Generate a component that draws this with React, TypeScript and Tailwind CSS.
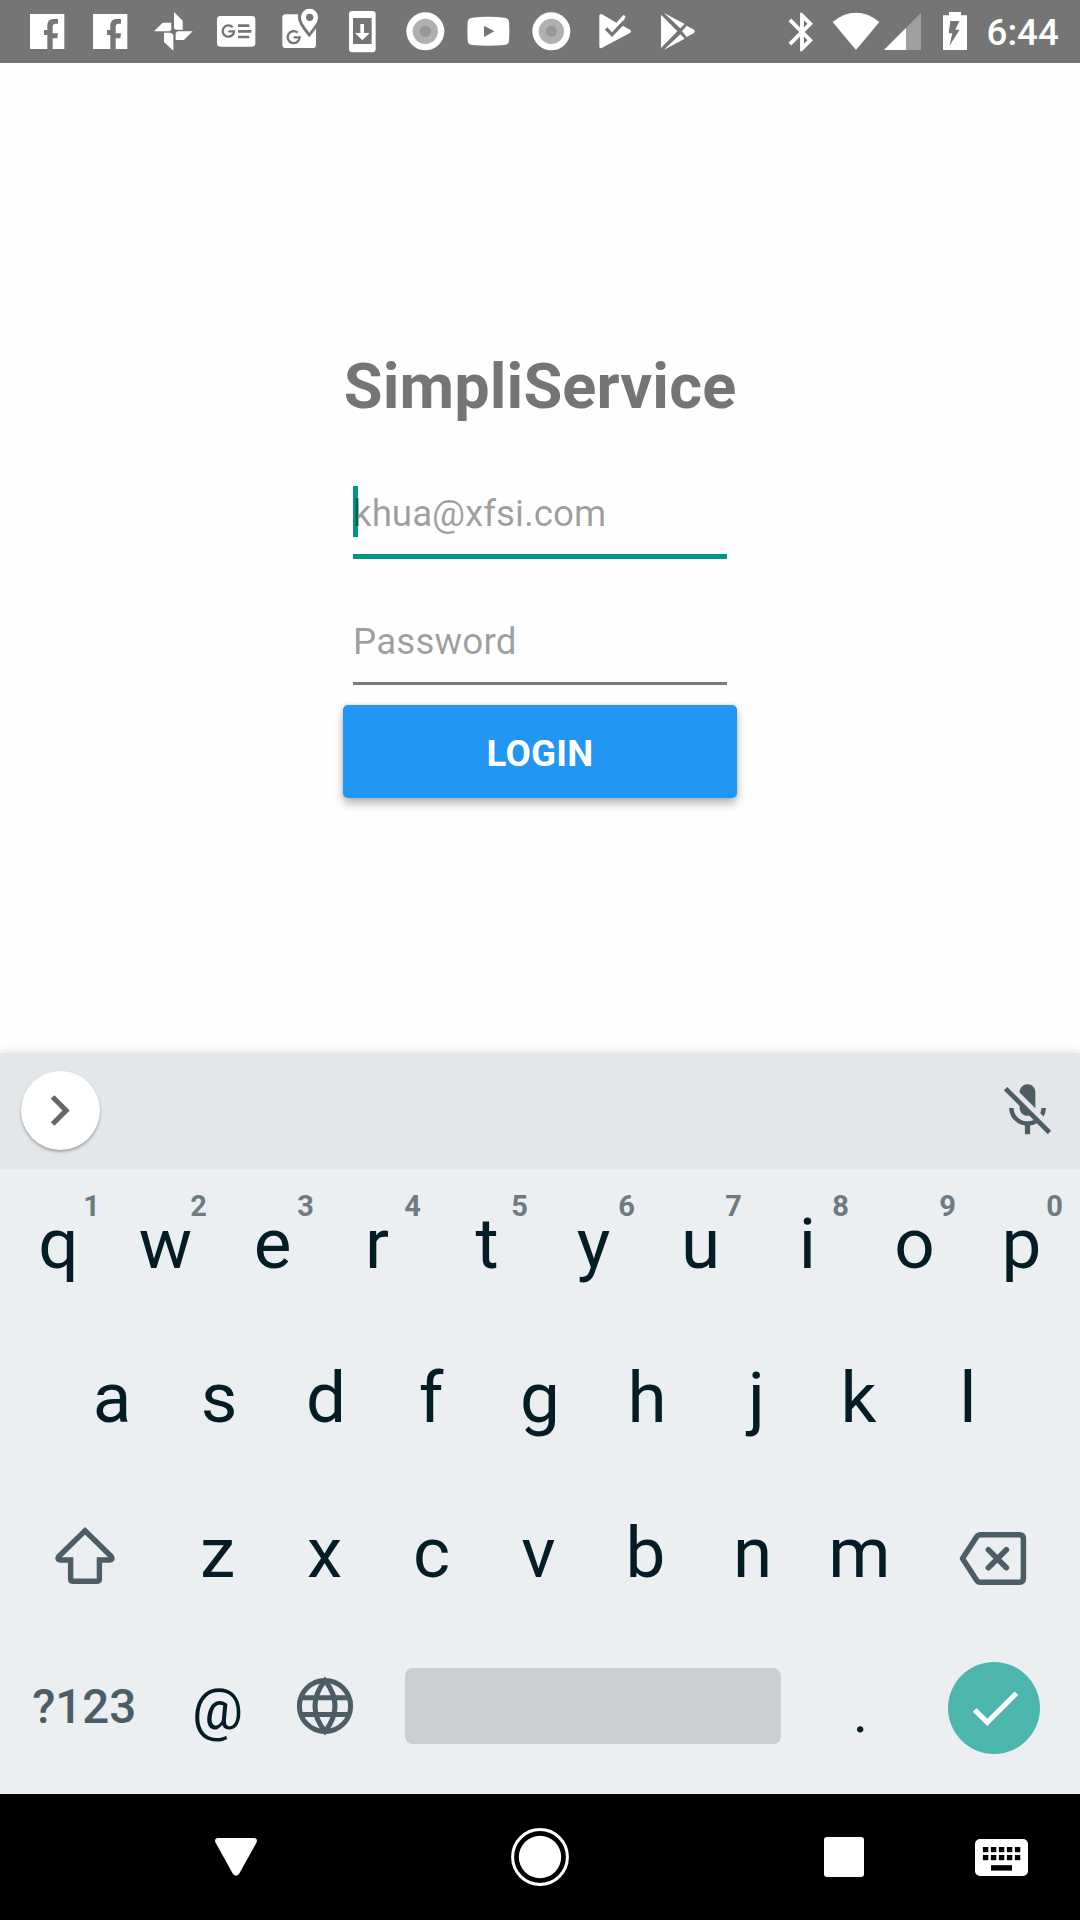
import type { ReactNode } from 'react';

const GRAY = '#757575';

function Notification({ x, children }: { x: number; children: ReactNode }) {
  return (
    <svg className="h-[63px] w-[63px] shrink-0" viewBox={`${x} 0 189 189`} fill="#fff">
      {children}
    </svg>
  );
}

function Facebook({ x }: { x: number }) {
  return (
    <Notification x={x}>
      <path
        transform={`translate(${x - 45} 0)`}
        fillRule="evenodd"
        d="M90 42h103v105h-35v-32h14l2-15h-16V80q0-9 9-9h7V57h-11c-15 0-21 8-21 20v13h-10v15h10v42H90z"
      />
    </Notification>
  );
}

function Record({ x }: { x: number }) {
  return (
    <Notification x={x}>
      <circle cx={x + 97} cy="94" r="57" />
      <circle cx={x + 97} cy="94" r="38" fill="#b0b0b0" />
      <circle cx={x + 97} cy="94" r="17" fill="#979797" />
    </Notification>
  );
}

function StatusBar() {
  return (
    <header className="flex h-[63px] shrink-0 bg-[#757575] pl-[15px] text-white">
      <Facebook x={45} />
      <Facebook x={234} />
      <Notification x={423}>
        <path d="M522 36l26 26v27h-21l-5-4zM462 94l26-26h26v21l-5 5zM578 94l-26 26h-25v-20l5-6zM520 152l-28-26V98h21l7 6z" />
      </Notification>
      <Notification x={612}>
        <rect x="651" y="48" width="115" height="92" rx="10" />
        <path d="M698 82a17 17 0 1 0 4 12h-17" fill="none" stroke={GRAY} strokeWidth="7" />
        <path d="M714 77h34M714 94h40M714 111h34" stroke={GRAY} strokeWidth="8" />
      </Notification>
      <Notification x={801}>
        <rect x="847" y="43" width="101" height="101" rx="10" />
        <path d="M928 112c-18-24-34-41-34-61a33 33 0 0 1 67 0c0 20-15 37-33 61z" fill={GRAY} />
        <path d="M928 99c-10-15-25-30-25-47a25 25 0 0 1 51 0c0 17-16 32-26 47z" />
        <circle cx="929" cy="52" r="11" fill={GRAY} />
        <path d="M893 98a18 18 0 1 0 6 14h-18" fill="none" stroke={GRAY} strokeWidth="7" />
      </Notification>
      <Notification x={-90}>
        <rect x="-33" y="33" width="80" height="124" rx="10" />
        <rect x="-21" y="54" width="56" height="78" fill={GRAY} />
        <path d="M1 72h11v27h17L7 121l-22-22H1z" />
      </Notification>
      <Record x={99} />
      <Notification x={288}>
        <path d="M336 53q49-5 98 0 12 1 13 12 2 29 0 58-1 11-13 12-49 4-98 0-12-1-13-12-2-29 0-58 1-11 13-12z" />
        <path d="M372 77l31 17-31 17z" fill={GRAY} />
      </Notification>
      <Record x={477} />
      <Notification x={666}>
        <path d="M718 46q2-5 8-3l43 25 22-24 6 6-14 24 28 16q5 4 0 8l-86 46q-6 2-7-4z" />
        <path d="M738 85l18 19 36-38" fill="none" stroke={GRAY} strokeWidth="10" />
      </Notification>
      <Notification x={855}>
        <path d="M903 44l49 50-49 50zM911 38l63 34-13 13zM911 150l63-34-13-13zM980 77l22 12q5 5 0 10l-22 12-14-17z" />
      </Notification>
      <svg className="ml-[71px] mt-[8.5px] size-[46px] shrink-0" viewBox="0 0 24 24" fill="#fff">
        <path d="M17.71 7.71L12 2h-1v7.59L6.41 5 5 6.41 10.59 12 5 17.59 6.41 19 11 14.41V22h1l5.71-5.71-4.3-4.29 4.3-4.29zM13 5.83l1.88 1.88L13 9.59V5.83zm1.88 10.46L13 18.17v-3.76l1.88 1.88z" />
      </svg>
      <svg className="ml-[7px] h-[63px] w-[48px] shrink-0" viewBox="336 0 144 189" fill="#fff">
        <path d="M338 66q33-28 70-28t70 28l-70 84z" />
      </svg>
      <svg className="ml-[3px] h-[63px] w-[39px] shrink-0" viewBox="489 0 117 189" fill="#fff">
        <path d="M492 150h111V38z" fill="#9f9f9f" />
        <path d="M492 150h66V84z" />
      </svg>
      <svg className="ml-[20px] h-[63px] w-[26px] shrink-0" viewBox="666 0 78 189" fill="#fff">
        <path d="M669 46h18V36h36v10h18v104h-72z" />
        <path d="M691 63h27l-12 26h13l-31 49 9-38h-11z" fill={GRAY} />
      </svg>
      <span className="ml-[18.5px] pt-[14px] text-[36.75px] font-medium leading-[38px]">6:44</span>
    </header>
  );
}

function LoginForm() {
  return (
    <main className="relative flex h-[990px] shrink-0 flex-col items-center bg-[#fefefe] pt-[292px]">
      <h1 className="text-[63px] font-bold leading-[63px] tracking-[0.15px] text-[#757575]">SimpliService</h1>
      <div className="relative mt-[68px] h-[73px] w-[374px] border-b-[5px] border-[#009688] pt-[9px]">
        <span className="absolute left-0 top-0 h-[51px] w-[5px] bg-[#009688]" />
        <span className="relative block text-[36.75px] leading-[37px] text-black/38">khua@xfsi.com</span>
      </div>
      <div className="mt-[64px] h-[62px] w-[374px] border-b-[3px] border-[#7b7b7b] text-[36.75px] leading-[37px] tracking-[0.15px] text-black/38">
        Password
      </div>
      <button className="mt-[20px] flex h-[93px] w-[394px] justify-center rounded-[5px] bg-[#2196f3] pt-[30px] text-[36.75px] font-bold leading-[37px] tracking-[0.2px] text-white shadow-[0_6px_10px_rgba(0,0,0,0.26),0_0_5px_rgba(0,0,0,0.14)]">
        LOGIN
      </button>
    </main>
  );
}

/* Letters whose side bearings leave the glyph away from the centre of its key. */
const KEY_PADDING: Record<string, string> = {
  r: 'pr-[5px]',
  f: 'pr-[4px]',
  k: 'pr-[5px]',
  j: 'pl-[5px]',
  t: 'pl-px',
};

function Key({ label, hint }: { label: string; hint?: string }) {
  return (
    <div className={`relative w-[107px] shrink-0 text-center ${KEY_PADDING[label] ?? ''}`}>
      {label}
      {hint && (
        <span className="absolute -top-[16px] right-[12px] text-[29px] font-bold leading-[29px] text-[#6e7b82]">
          {hint}
        </span>
      )}
    </div>
  );
}

function Keyboard() {
  return (
    <section className="relative flex h-[741px] shrink-0 flex-col bg-[#ebeff2] text-[71px] leading-[71px] text-[#041c26] shadow-[0_0_9px_rgba(0,0,0,0.15)]">
      <div className="flex h-[116px] shrink-0 items-start justify-between bg-[#e3e7ea] pl-[21px] pr-[21px]">
        <div className="mt-[18px] flex size-[79px] items-center justify-center rounded-full bg-white pr-[2px] shadow-[0_2px_3px_rgba(0,0,0,0.3)]">
          <svg className="size-[61px]" viewBox="0 0 24 24" fill="#666">
            <path d="M10 6L8.59 7.41 13.17 12l-4.58 4.59L10 18l6-6z" />
          </svg>
        </div>
        <svg className="mt-[26px] size-[63px]" viewBox="0 0 24 24" fill="#4c5d65">
          <path d="M19 11h-1.7c0 .74-.16 1.43-.43 2.05l1.23 1.23c.56-.98.9-2.09.9-3.28zm-4.02.17c0-.06.02-.11.02-.17V5c0-1.66-1.34-3-3-3S9 3.34 9 5v.18l5.98 5.99zM4.27 3L3 4.27l6.01 6.01V11c0 1.66 1.33 3 2.99 3 .22 0 .44-.03.65-.08l1.66 1.66c-.71.33-1.5.52-2.31.52-2.76 0-5.3-2.1-5.3-5.1H5c0 3.41 2.72 6.23 6 6.72V21h2v-3.28c.91-.13 1.77-.45 2.54-.9L19.73 21 21 19.73 4.27 3z" />
        </svg>
      </div>
      <div className="flex h-[151px] shrink-0 justify-center pt-[39px]">
        {'qwertyuiop'.split('').map((c, i) => (
          <Key key={c} label={c} hint={String((i + 1) % 10)} />
        ))}
      </div>
      <div className="flex h-[154px] shrink-0 justify-center pt-[42px]">
        {'asdfghjkl'.split('').map((c) => (
          <Key key={c} label={c} />
        ))}
      </div>
      <div className="flex h-[155px] shrink-0 pl-[4.5px] pt-[43px]">
        <div className="flex w-[159.5px] justify-center">
          <svg className="ml-px mt-[7px] h-[64px] w-[64px]" viewBox="53 1524 64 64" fill="none" stroke="#4c5d65" strokeWidth="5.4">
            <path d="M85 1530.8L111.3 1556.6q2 3-1.7 3.4H99.4V1579q0 2.2-2.2 2.2H72.8q-2.2 0-2.2-2.2V1560H60.4q-3.7-.4-1.7-3.4z" />
          </svg>
        </div>
        {'zxcvbnm'.split('').map((c) => (
          <Key key={c} label={c} />
        ))}
        <div className="flex w-[159.5px] justify-center">
          <svg className="mt-[7px] h-[64px] w-[70px]" viewBox="958 1524 70 64" fill="none" stroke="#4c5d65" strokeWidth="5.5" strokeLinejoin="round" strokeLinecap="round">
            <path d="M962.5 1558.5L976.5 1537q1.5-2.3 4-2.3h38.9q4 0 4 4v39.5q0 4-4 4h-38.9q-2.5 0-4-2.3z" />
            <path d="M988.4 1549.7l18 18M1006.4 1549.7l-18 18" />
          </svg>
        </div>
      </div>
      <div className="flex h-[154px] shrink-0 pl-[4.5px]">
        <div className="w-[159.5px] pt-[54px] text-center text-[47.5px] font-medium leading-[48px] text-[#4c5d65]">?123</div>
        <div className="w-[107px] pt-[52px] text-center text-[57px] leading-[57px]">@</div>
        <div className="flex w-[107px] justify-center pt-[47px]">
          <svg className="size-[60px]" viewBox="295 1676 60 60" fill="none" stroke="#4c5d65" strokeWidth="5">
            <circle cx="325" cy="1706" r="25.6" />
            <path d="M325 1680.5q-20 25.5 0 51q20-25.5 0-51zM301 1697.7h48M301 1714.5h48" />
          </svg>
        </div>
        <div className="ml-[27px] mt-[39px] h-[76px] w-[376px] rounded-[8px] bg-[#c9ced0]" />
        <div className="ml-[26px] w-[107px] pt-[55px] text-center text-[57px] leading-[57px]">.</div>
        <div className="ml-[34px] mt-[33px] flex size-[92px] items-center justify-center rounded-full bg-[#4db6ac] pl-px">
          <svg className="size-[62px]" viewBox="0 0 24 24" fill="#fff">
            <path d="M9 16.17L4.83 12l-1.42 1.41L9 19 21 7l-1.41-1.41z" />
          </svg>
        </div>
      </div>
    </section>
  );
}

function NavigationBar() {
  return (
    <nav className="flex h-[126px] shrink-0 items-center bg-black pl-[215px]">
      <svg className="h-[38px] w-[42px]" viewBox="0 0 42 38" fill="#fff">
        <path d="M3 0H39q4 .5 2.5 4.5L24 36q-3 3.5-6 0L.5 4.5Q-1 .5 3 0z" />
      </svg>
      <svg className="ml-[253px] size-[60px]" viewBox="0 0 60 60" fill="#fff">
        <circle cx="30" cy="30" r="27.4" fill="none" stroke="#fff" strokeWidth="3" />
        <circle cx="30" cy="30" r="21.2" />
      </svg>
      <div className="ml-[254px] size-[40px] rounded-[3px] bg-white" />
      <svg className="ml-[111px] mt-px h-[37px] w-[53px]" viewBox="0 0 53 37">
        <rect width="53" height="37" rx="5" fill="#fff" />
        {[0, 1, 2, 3, 4].map((i) => (
          <g key={i}>
            <rect x={7.9 + i * 8} y="8" width="5.4" height="5.2" />
            <rect x={7.9 + i * 8} y="16" width="5.4" height="5.2" />
          </g>
        ))}
        <rect x="16" y="26.2" width="21" height="5.4" />
      </svg>
    </nav>
  );
}

export default function App() {
  return (
    <div className="flex h-[1920px] w-[1080px] flex-col overflow-hidden font-['Roboto',sans-serif]">
      <StatusBar />
      <LoginForm />
      <Keyboard />
      <NavigationBar />
    </div>
  );
}
